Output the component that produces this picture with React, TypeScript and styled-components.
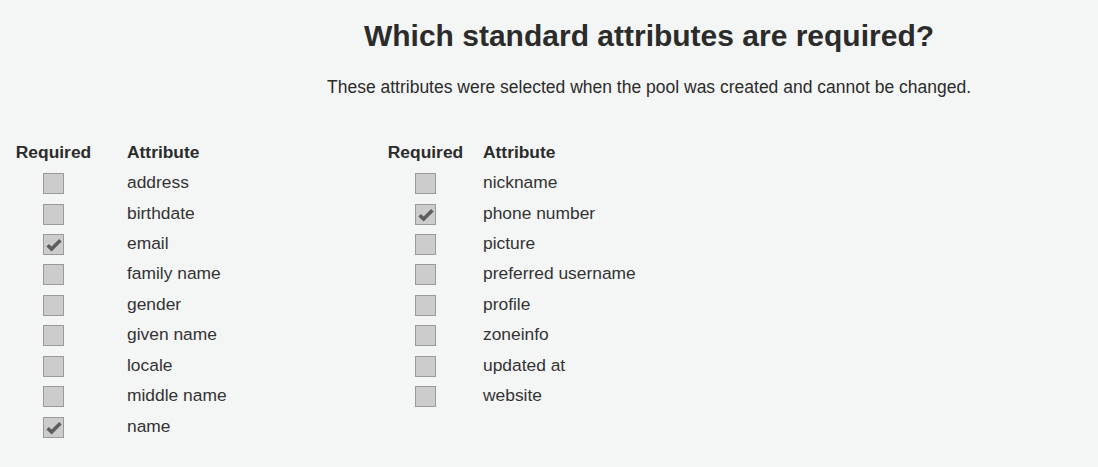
import React from "react";
import styled, { createGlobalStyle } from "styled-components";

const Global = createGlobalStyle`
  html, body { margin: 0; padding: 0; background: #f4f6f5; }
  body { font-family: "Liberation Sans", Arial, sans-serif; color: #2b2b2b; }
`;

const Page = styled.div`
  width: 1098px;
  height: 467px;
  background: #f4f6f5;
  display: flex;
  flex-direction: column;
`;

const Header = styled.header`
  padding: 18px 0 0 200px;
  text-align: center;
`;

const Title = styled.h1`
  margin: 0;
  font-size: 30px;
  line-height: 36px;
  font-weight: 700;
  color: #2b2b2b;
`;

const Subtitle = styled.p`
  margin: 22px 0 0;
  font-size: 17.5px;
  line-height: 22px;
  color: #2b2b2b;
`;

const Tables = styled.div`
  display: flex;
  padding: 39px 0 0 16px;
`;

const Table = styled.div<{ $width?: number; $gap: number }>`
  display: grid;
  grid-template-columns: 75px max-content;
  grid-auto-rows: 30.45px;
  column-gap: ${(p) => p.$gap}px;
  align-content: start;
  width: ${(p) => (p.$width ? `${p.$width}px` : "auto")};
`;

const Th = styled.div<{ $center?: boolean }>`
  display: flex;
  align-items: center;
  justify-content: ${(p) => (p.$center ? "center" : "flex-start")};
  font-size: 17.4px;
  font-weight: 700;
  color: #2b2b2b;
  white-space: nowrap;
`;

const Cell = styled.div<{ $center?: boolean }>`
  display: flex;
  align-items: center;
  justify-content: ${(p) => (p.$center ? "center" : "flex-start")};
  font-size: 17.4px;
  color: #333;
  white-space: nowrap;
`;

const Box = styled.span`
  width: 19px;
  height: 19px;
  border: 1px solid #9a9a9a;
  background: #cccccc;
  display: block;
  margin-top: 2px;
  svg { display: block; }
`;

function Check({ checked }: { checked: boolean }) {
  return (
    <Box>
      {checked && (
        <svg width="19" height="19" viewBox="0 0 19 19">
          <path
            d="M3.6 10.2 L7.6 14 L16.4 5.2"
            fill="none"
            stroke="#5e5e5e"
            strokeWidth="3.6"
            strokeLinejoin="miter"
          />
        </svg>
      )}
    </Box>
  );
}

const left: [string, boolean][] = [
  ["address", false],
  ["birthdate", false],
  ["email", true],
  ["family name", false],
  ["gender", false],
  ["given name", false],
  ["locale", false],
  ["middle name", false],
  ["name", true],
];

const right: [string, boolean][] = [
  ["nickname", false],
  ["phone number", true],
  ["picture", false],
  ["preferred username", false],
  ["profile", false],
  ["zoneinfo", false],
  ["updated at", false],
  ["website", false],
];

function AttrTable({
  rows,
  width,
  gap,
}: {
  rows: [string, boolean][];
  width?: number;
  gap: number;
}) {
  return (
    <Table $width={width} $gap={gap}>
      <Th $center>Required</Th>
      <Th>Attribute</Th>
      {rows.map(([name, checked]) => (
        <React.Fragment key={name}>
          <Cell $center>
            <Check checked={checked} />
          </Cell>
          <Cell>{name}</Cell>
        </React.Fragment>
      ))}
    </Table>
  );
}

export default function App() {
  return (
    <Page>
      <Global />
      <Header>
        <Title>Which standard attributes are required?</Title>
        <Subtitle>
          These attributes were selected when the pool was created and cannot be changed.
        </Subtitle>
      </Header>
      <Tables>
        <AttrTable rows={left} width={372} gap={36} />
        <AttrTable rows={right} gap={20} />
      </Tables>
    </Page>
  );
}
